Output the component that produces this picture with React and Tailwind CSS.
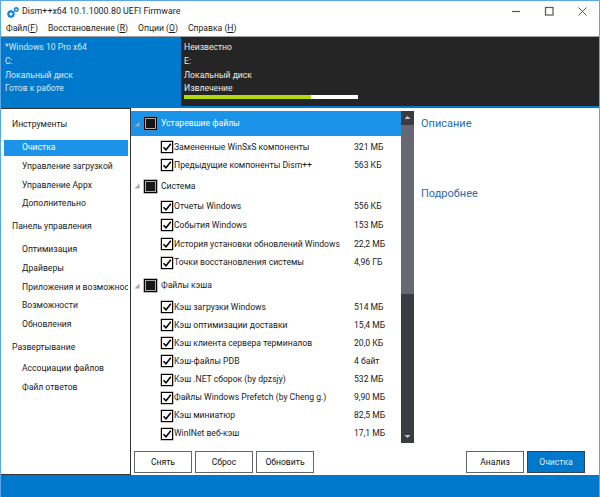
import React from 'react';

const font = { fontFamily: 'Roboto, "Noto Sans", sans-serif' };

const navGroups = [
  { title: 'Инструменты', items: ['Очистка', 'Управление загрузкой', 'Управление Appx', 'Дополнительно'], gap: 'mt-[6px]' },
  { title: 'Панель управления', items: ['Оптимизация', 'Драйверы', 'Приложения и возможнос', 'Возможности', 'Обновления'], gap: 'mt-[6px]' },
  { title: 'Развертывание', items: ['Ассоциации файлов', 'Файл ответов'], gap: 'mt-[4px]' },
];

const groups = [
  {
    title: 'Устаревшие файлы',
    selected: true,
    head: 'h-[25px] mb-[2px]',
    row: 'h-[18.25px]',
    items: [
      ['Замененные WinSxS компоненты', '321 МБ'],
      ['Предыдущие компоненты Dism++', '563 КБ'],
    ],
  },
  {
    title: 'Система',
    head: 'h-[23px]',
    row: 'h-[18.6px]',
    items: [
      ['Отчеты Windows', '556 КБ'],
      ['События Windows', '153 МБ'],
      ['История установки обновлений Windows', '22,2 МБ'],
      ['Точки восстановления системы', '4,96 ГБ'],
    ],
  },
  {
    title: 'Файлы кэша',
    head: 'h-[24px] mt-[2px]',
    row: 'h-[18.15px]',
    items: [
      ['Кэш загрузки Windows', '514 МБ'],
      ['Кэш оптимизации доставки', '15,4 МБ'],
      ['Кэш клиента сервера терминалов', '20,0 КБ'],
      ['Кэш-файлы PDB', '4 байт'],
      ['Кэш .NET сборок (by dpzsjy)', '532 МБ'],
      ['Файлы Windows Prefetch (by Cheng g.)', '9,90 МБ'],
      ['Кэш миниатюр', '82,5 МБ'],
      ['WinINet веб-кэш', '17,1 МБ'],
    ],
  },
];

const Logo = () => (
  <svg width="12" height="11" viewBox="0 0 12 11" className="mt-[2px] shrink-0">
    <circle cx="4" cy="7" r="2.6" fill="none" stroke="#1a84dc" strokeWidth="2.2" />
    <circle cx="9.2" cy="2.6" r="1.7" fill="none" stroke="#1a84dc" strokeWidth="1.6" />
    <path d="M4 2.6 V3.6 M4 10.4 V11 M0 7 H0.6 M7.4 7 H8 M1.2 4.2 L1.8 4.8 M6.2 9.2 L6.8 9.8 M6.8 4.2 L6.2 4.8 M1.8 9.2 L1.2 9.8" stroke="#1a84dc" strokeWidth="1" />
  </svg>
);

const Check = () => (
  <span className="flex h-[12px] w-[12px] shrink-0 items-center justify-center border-[1.5px] border-black bg-white shadow-[0_0_0_0.5px_#9a8a80]">
    <svg width="10" height="10" viewBox="0 0 10 10">
      <path d="M1.5 5.2 L4 7.8 L8.8 1.8" fill="none" stroke="#000" strokeWidth="1.5" />
    </svg>
  </span>
);

const Mixed = () => (
  <span className="flex h-[13px] w-[13px] shrink-0 items-center justify-center border border-black bg-[#aaa] shadow-[0_0_0_0.5px_#777]">
    <span className="h-[9px] w-[9px] bg-[#161616]" />
  </span>
);

const Arrow = () => (
  <svg width="6" height="6" viewBox="0 0 6 6" className="shrink-0">
    <path d="M5.5 0.5 V5.5 H0.5 Z" fill="#a8a8a8" />
  </svg>
);

const Btn = ({ children, primary }) => (
  <button
    className={`h-[22px] w-[58px] border text-[8.6px] ${primary ? 'border-[#33425c] bg-[#0078cc] text-[#dfeefa]' : 'border-[#666] bg-white text-[#111]'}`}
  >
    {children}
  </button>
);

export default function App() {
  return (
    <div className="flex h-[497px] w-[600px] flex-col overflow-hidden border-x border-t border-[#5aa9e6] bg-white text-[8.6px] text-[#1a1a1a]" style={font}>
      <div className="flex h-[20px] shrink-0 items-center pl-[6px]">
        <Logo />
        <span className="ml-[3px] mt-[2px] text-[8.9px] text-[#222]">Dism++x64 10.1.1000.80 UEFI Firmware</span>
        <div className="ml-auto flex items-center gap-[22px] pr-[11px] pt-[1px]">
          <svg width="11" height="11" viewBox="0 0 11 11"><path d="M1 5.5 H9" stroke="#555" strokeWidth="1.2" /></svg>
          <svg width="11" height="11" viewBox="0 0 11 11"><rect x="1.5" y="1.5" width="7.5" height="7.5" fill="none" stroke="#555" strokeWidth="1.2" /></svg>
          <svg width="11" height="11" viewBox="0 0 11 11"><path d="M1.5 1.5 L9.5 9.5 M9.5 1.5 L1.5 9.5" stroke="#555" strokeWidth="1" /></svg>
        </div>
      </div>

      <div className="flex h-[15px] shrink-0 items-center gap-[10px] pl-[5px]">
        <span>Файл(<u>F</u>)</span>
        <span>Восстановление (<u>R</u>)</span>
        <span>Опции (<u>O</u>)</span>
        <span>Справка (<u>H</u>)</span>
      </div>

      <div className="flex h-[72px] shrink-0 border-t border-[#a0a0a0]">
        <div className="w-[180px] bg-[#0078cc] pl-[4px] pt-[4px] text-[#d8ecfa]">
          {['*Windows 10 Pro x64', 'C:', 'Локальный диск', 'Готов к работе'].map((t) => (
            <div key={t} className="h-[13.75px] leading-[13.75px]">{t}</div>
          ))}
        </div>
        <div className="flex-1 border-b-2 border-[#0078cc] bg-[#252525] pl-[3px] pt-[4px] text-[#ececec]">
          {['Неизвестно', 'E:', 'Локальный диск', 'Извлечение'].map((t) => (
            <div key={t} className="h-[13.75px] leading-[13.75px]">{t}</div>
          ))}
          <div className="-mt-px flex h-[4px] w-[174px] bg-white">
            <div className="h-full w-[127px] bg-[#b2d80e]" />
          </div>
        </div>
      </div>

      <div className="flex min-h-0 flex-1">
        <div className="w-[130px] shrink-0 border-y border-r border-[#333] bg-white pl-[3px] pr-[2px] pt-[6px]">
          {navGroups.map((g) => (
            <div key={g.title} className="mb-[2px]">
              <div className="h-[19px] pl-[8px] leading-[19px]">{g.title}</div>
              <div className={g.gap}>
                {g.items.map((item) => (
                  <div key={item} className="h-[18.75px]">
                    <div className={`h-[16px] overflow-hidden whitespace-nowrap pl-[18px] leading-[15px] ${item === 'Очистка' ? 'bg-[#1a93e8] text-white' : ''}`}>
                      {item}
                    </div>
                  </div>
                ))}
              </div>
            </div>
          ))}
        </div>

        <div className="flex min-w-0 flex-1 flex-col pt-[3px]">
          <div className="flex min-h-0 flex-1">
            <div className="flex h-[332px] w-[283px] shrink-0">
              <div className="w-[270px] overflow-hidden">
                {groups.map((g) => (
                  <div key={g.title}>
                    <div className={`flex items-center gap-[3px] pl-[3px] ${g.head} ${g.selected ? 'bg-[#1a93e8] text-white' : ''}`}>
                      <Arrow />
                      <span className="ml-px mr-px"><Mixed /></span>
                      <span>{g.title}</span>
                    </div>
                    {g.items.map(([name, size]) => (
                      <div key={name} className={`flex items-center pl-[30px] ${g.row}`}>
                        <Check />
                        <span className="ml-[1px] w-[180px] whitespace-nowrap">{name}</span>
                        <span className="whitespace-nowrap">{size}</span>
                      </div>
                    ))}
                  </div>
                ))}
              </div>
              <div className="flex w-[13px] flex-col items-center bg-[#3b3b42]">
                <svg width="13" height="14" viewBox="0 0 13 14"><path d="M3.5 8 L6.5 5 L9.5 8 Z" fill="#c8c8c8" /></svg>
                <div className="h-[169px] w-full bg-[#686874]" />
                <svg className="mt-auto" width="13" height="14" viewBox="0 0 13 14"><path d="M3.5 6 L6.5 9 L9.5 6 Z" fill="#c8c8c8" /></svg>
              </div>
            </div>
            <div className="pl-[7px] pt-[4px] text-[11px] text-[#2a6cb0]">
              <div className="h-[70px] leading-[18px]">Описание</div>
              <div className="leading-[18px]">Подробнее</div>
            </div>
          </div>
          <div className="flex h-[25px] shrink-0 items-start justify-between pl-[3px] pr-[14px] pt-[1px]">
            <div className="flex gap-[3px]">
              <Btn>Снять</Btn>
              <Btn>Сброс</Btn>
              <Btn>Обновить</Btn>
            </div>
            <div className="flex gap-[3px]">
              <Btn>Анализ</Btn>
              <Btn primary>Очистка</Btn>
            </div>
          </div>
        </div>
      </div>

      <div className="h-[22px] shrink-0 bg-[#0078cc]" />
    </div>
  );
}
